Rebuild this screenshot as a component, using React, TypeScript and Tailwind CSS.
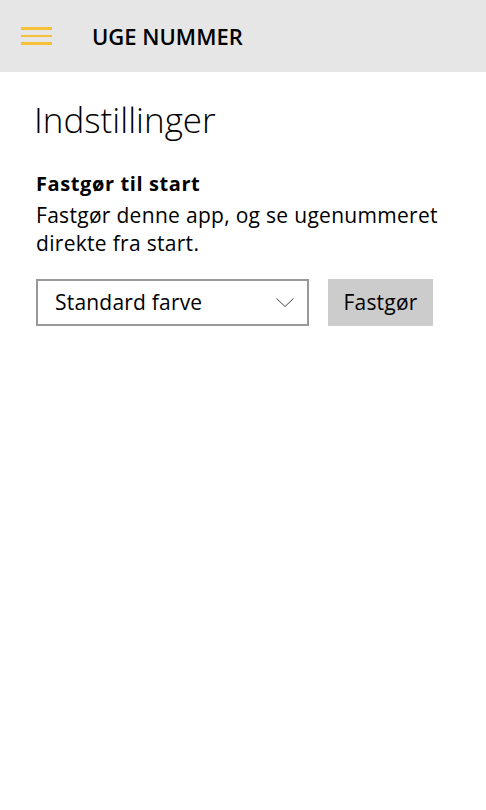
import React from "react";

export default function App() {
  return (
    <div className="w-[486px] h-[810px] bg-white" style={{ fontFamily: '"Open Sans", "Noto Sans", sans-serif' }}>
      <div className="h-[72px] bg-[#e6e6e6] flex items-center">
        <div className="ml-[21px] w-[31px] flex flex-col gap-[5px]">
          <div className="h-[2.5px] bg-[#f7c137]" />
          <div className="h-[2.5px] bg-[#f7c137]" />
          <div className="h-[2.5px] bg-[#f7c137]" />
        </div>
        <div className="ml-[40px] text-[22px] font-semibold text-black">UGE NUMMER</div>
      </div>
      <div className="px-[36px]">
        <h1 className="mt-[24px] text-[35px] font-light text-black leading-[48px] -ml-[2px]">Indstillinger</h1>
        <div className="mt-[26px] text-[20px] font-bold text-black leading-[28px] tracking-[0.6px]">Fastgør til start</div>
        <div className="mt-[3px] text-[21px] text-black leading-[28px] tracking-[0.3px]">
          Fastgør denne app, og se ugenummeret
          <br />
          direkte fra start.
        </div>
        <div className="mt-[22px] flex gap-[19px]">
          <div className="w-[273px] h-[47px] border-2 border-[#999999] flex items-center justify-between pl-[17px] pr-[13px]">
            <span className="text-[21px] text-black tracking-[0.2px]">Standard farve</span>
            <svg width="18" height="9" viewBox="0 0 18 9" fill="none">
              <path d="M0.5 0.5L9 8.5L17.5 0.5" stroke="#444" strokeWidth="1" />
            </svg>
          </div>
          <button className="w-[105px] h-[47px] bg-[#cccccc] text-[21px] text-black tracking-[0.2px]">Fastgør</button>
        </div>
      </div>
    </div>
  );
}
